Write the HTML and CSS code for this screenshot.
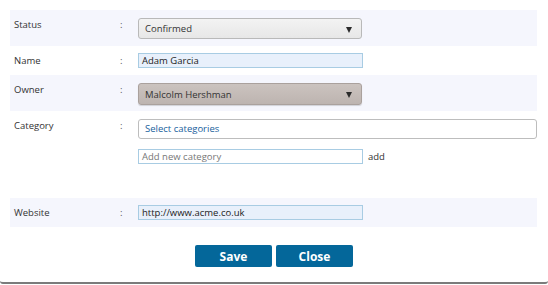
FILE: index.html
```html
<!DOCTYPE html>
<html>
<head>
<meta charset="utf-8">
<link rel="stylesheet" href="styles.css">
</head>
<body>
<div class="modal">
  <div class="form">
    <div class="row tall shade">
      <div class="label">Status</div>
      <div class="colon">:</div>
      <div class="value">
        <div class="select">
          <span>Confirmed</span>
          <span class="arrow"></span>
        </div>
      </div>
    </div>
    <div class="row short">
      <div class="label">Name</div>
      <div class="colon">:</div>
      <div class="value"><div class="input filled">Adam Garcia</div></div>
    </div>
    <div class="row tall shade">
      <div class="label">Owner</div>
      <div class="colon">:</div>
      <div class="value">
        <div class="select owner">
          <span>Malcolm Hershman</span>
          <span class="arrow"></span>
        </div>
      </div>
    </div>
    <div class="row category">
      <div class="label">Category</div>
      <div class="colon">:</div>
      <div class="value">
        <div class="multi">Select categories</div>
        <div class="add-line">
          <div class="input blank">Add new category</div>
          <span class="add">add</span>
        </div>
      </div>
    </div>
    <div class="row short shade">
      <div class="label">Website</div>
      <div class="colon">:</div>
      <div class="value"><div class="input filled">http://www.acme.co.uk</div></div>
    </div>
  </div>
  <div class="actions">
    <button class="btn">Save</button>
    <button class="btn">Close</button>
  </div>
</div>
</body>
</html>
```

FILE: styles.css
```css
html, body {
  margin: 0;
  padding: 0;
  background: #ffffff;
}
body {
  font-family: "Open Sans", "Noto Sans", sans-serif;
  font-size: 9.5px;
  color: #333;
}
.modal {
  width: 548px;
  height: 282px;
  background: #fff;
  border-bottom: 2px solid #7b7b7b;
  border-radius: 0 0 3px 3px;
  box-sizing: content-box;
}
.form {
  padding: 10px 11px 0 10px;
}
.row {
  display: grid;
  grid-template-columns: 106px 18px 1fr;
  padding-left: 4px;
  box-sizing: border-box;
}
.shade {
  background: #f5f6fd;
}
.tall {
  height: 36px;
  padding-top: 8px;
}
.short {
  height: 29px;
  padding-top: 7px;
}
.category {
  height: 87px;
  padding-top: 8px;
}
.label, .colon {
  line-height: 14px;
  margin-top: 0;
  color: #333;
}
.short .label, .short .colon { margin-top: 1px; }
.colon {
  color: #555;
}
.select {
  width: 224px;
  height: 21px;
  box-sizing: border-box;
  border: 1px solid #b9b9b9;
  border-radius: 3px;
  background: linear-gradient(#f3f3f3, #e7e7e7);
  display: flex;
  align-items: center;
  justify-content: space-between;
  padding: 0 9px 0 6px;
  color: #333;
}
.select.owner {
  border-color: #aaa19d;
  background: linear-gradient(#cbc3bf, #bdb4b0);
  box-shadow: 0 1px 1px rgba(0,0,0,0.15);
  height: 22px;
}
.arrow {
  width: 0;
  height: 0;
  border-left: 3.5px solid transparent;
  border-right: 3.5px solid transparent;
  border-top: 6px solid #2b2b2b;
  margin-top: 2px;
}
.input {
  width: 225px;
  height: 15px;
  box-sizing: border-box;
  border: 1px solid #a8cce3;
  line-height: 13px;
  padding-left: 3px;
  color: #222;
}
.input.filled {
  background: #e8f0fb;
}
.input.blank {
  background: #fff;
  color: #777;
}
.multi {
  width: 399px;
  height: 20px;
  box-sizing: border-box;
  border: 1px solid #bdbdbd;
  border-radius: 3px;
  background: #fff;
  color: #17609c;
  line-height: 18px;
  padding-left: 6px;
}
.add-line {
  display: flex;
  align-items: center;
  gap: 5px;
  margin-top: 10px;
}
.add {
  color: #333;
  line-height: 13px;
}
.actions {
  display: flex;
  justify-content: center;
  gap: 4px;
  margin-top: 18px;
}
.btn {
  width: 77px;
  height: 22px;
  border: none;
  border-radius: 2px;
  background: #04679a;
  color: #fff;
  font-family: "Open Sans", "Noto Sans", sans-serif;
  font-weight: 700;
  font-size: 12px;
  padding: 0;
  margin: 0;
}
```
